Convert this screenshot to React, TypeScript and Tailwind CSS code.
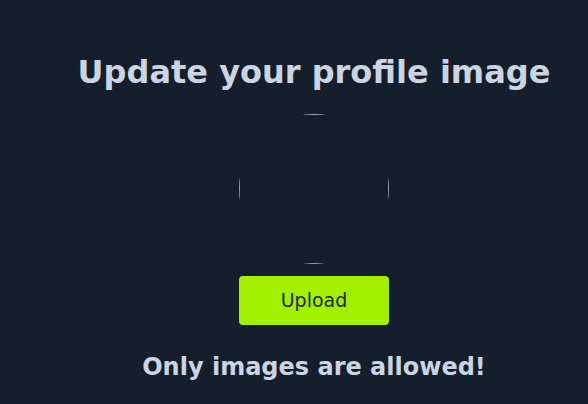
export default function App() {
  return (
    <div
      className="min-h-[404px] w-full bg-[#151e2d] pl-10 flex flex-col items-center"
      style={{ fontFamily: '"DejaVu Sans", sans-serif' }}
    >
      <h1 className="pt-[52px] text-[32px] leading-[40px] font-bold text-[#cbd5e1]">
        Update your profile image
      </h1>

      {/* Avatar placeholder */}
      <div className="mt-[22px] w-[150px] h-[150px] rounded-full overflow-hidden">
        <div className="w-full h-full border border-gray-400" />
      </div>

      <button className="mt-3 w-[150px] h-[49px] rounded bg-[#a2f000] text-[19px] text-[#1f2937]">
        Upload
      </button>

      <p className="mt-[26px] text-2xl leading-8 font-bold text-[#cbd5e1]">
        Only images are allowed!
      </p>
    </div>
  );
}
